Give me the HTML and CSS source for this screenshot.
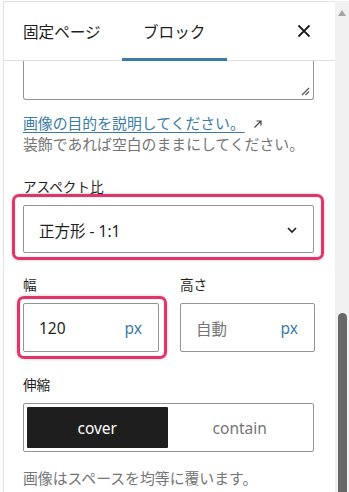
FILE: index.html
```html
<!DOCTYPE html>
<html lang="ja">
<head>
<meta charset="utf-8">
<link rel="stylesheet" href="styles.css">
</head>
<body>
<div class="window">
  <div class="panel">
    <div class="header">
      <div class="tab">固定ページ</div>
      <div class="tab active">ブロック</div>
      <div class="close">
        <svg width="14" height="14" viewBox="0 0 14 14"><path d="M1.5 1.5 12.5 12.5M12.5 1.5 1.5 12.5" stroke="#1e1e1e" stroke-width="1.8" fill="none"/></svg>
      </div>
    </div>
    <div class="content">
      <div class="textarea-frag">
        <svg class="resize" width="9" height="9" viewBox="0 0 9 9"><path d="M1 8 8 1M4.5 8 8 4.5" stroke="#555" stroke-width="1.2" fill="none"/></svg>
      </div>
      <p class="link-line"><a class="link">画像の目的を説明してください。</a><svg class="ext" width="10" height="10" viewBox="0 0 10 10"><path d="M1.5 8.5 8 2M3.5 2H8V6.5" stroke="#444" stroke-width="1.2" fill="none"/></svg></p>
      <p class="help">装飾であれば空白のままにしてください。</p>

      <div class="label first-label">アスペクト比</div>
      <div class="select-wrap">
        <div class="select">
          <span>正方形 - 1:1</span>
          <svg class="chev" width="12" height="8" viewBox="0 0 12 8"><path d="M2 2 6 6 10 2" stroke="#1e1e1e" stroke-width="1.6" fill="none"/></svg>
        </div>
        <div class="mark mark-select"></div>
      </div>

      <div class="dims">
        <div class="dim">
          <div class="label">幅</div>
          <div class="input-wrap">
            <div class="input"><span class="val">120</span><span class="unit">px</span></div>
            <div class="mark mark-width"></div>
          </div>
        </div>
        <div class="dim">
          <div class="label">高さ</div>
          <div class="input"><span class="val placeholder">自動</span><span class="unit">px</span></div>
        </div>
      </div>

      <div class="label">伸縮</div>
      <div class="toggle">
        <div class="opt selected">cover</div>
        <div class="opt">contain</div>
      </div>
      <p class="help help-last">画像はスペースを均等に覆います。</p>
    </div>
  </div>
  <div class="scrollbar">
    <div class="arrow"></div>
    <div class="thumb"></div>
  </div>
</div>
</body>
</html>
```
FILE: styles.css
```css
* { box-sizing: border-box; }
html, body { margin: 0; padding: 0; background: #fff; }
body {
  font-family: "Noto Sans", "Noto Sans CJK JP", sans-serif;
  color: #1e1e1e;
  width: 349px;
  height: 492px;
  overflow: hidden;
}
.window {
  display: flex;
  height: 492px;
  padding-top: 1px;
}
.panel {
  flex: 1;
  margin-left: 3px;
  border-left: 1px solid #e2e2e2;
  border-top: 1px solid #e2e2e2;
  min-width: 0;
}
.header {
  height: 59px;
  display: flex;
  align-items: stretch;
  border-bottom: 1px solid #e0e0e0;
}
.tab {
  display: flex;
  align-items: center;
  padding: 0 21px 0 19px;
  font-family: "Noto Sans CJK JP", sans-serif;
  font-size: 15.6px;
  color: #1e1e1e;
  position: relative;
}
.tab.active {
  padding: 0 21px;
  width: 105px;
  justify-content: center;
}
.tab.active::after {
  content: "";
  position: absolute;
  left: 0;
  right: 0;
  bottom: -1px;
  height: 3px;
  background: #3a7ca5;
}
.close {
  margin-left: auto;
  margin-right: 24px;
  display: flex;
  align-items: center;
}
.content {
  padding: 0 21px 0 19px;
}
.textarea-frag {
  height: 39px;
  border: 1px solid #949494;
  border-top: none;
  border-radius: 0 0 3px 3px;
  position: relative;
}
.resize {
  position: absolute;
  right: 3px;
  bottom: 3px;
}
.link-line, .help {
  margin: 0;
  font-family: "Noto Sans CJK JP", sans-serif;
  font-size: 14.85px;
  line-height: 21px;
}
.link-line {
  margin-top: 12px;
  display: flex;
  align-items: center;
}
.link {
  color: #3a7ca5;
  text-decoration: underline;
  text-underline-offset: 3px;
  text-decoration-thickness: 1px;
}
.ext { margin-left: 8px; margin-top: 2px; }
.help { color: #757575; }
.label {
  font-family: "Noto Sans CJK JP", sans-serif;
  font-size: 13.6px;
  line-height: 20px;
  font-weight: 400;
  color: #1e1e1e;
  margin-top: 22px;
  margin-bottom: 9px;
}
.first-label { margin-top: 22px; }
.select-wrap, .input-wrap { position: relative; }
.select {
  height: 48px;
  border: 1px solid #949494;
  border-radius: 2px;
  display: flex;
  align-items: center;
  justify-content: space-between;
  padding: 2px 15px 0 15px;
  font-size: 15.5px;
}
.mark {
  position: absolute;
  border: 3.5px solid #e2336b;
  border-radius: 7px;
  box-shadow: 0 0 3px rgba(0,0,0,0.25), inset 0 0 2px rgba(0,0,0,0.15);
  pointer-events: none;
}
.mark-select { left: -11px; right: -10px; top: -11px; bottom: -7px; }
.mark-width { left: -6px; right: -8px; top: -7px; bottom: -7px; }
.dims {
  display: grid;
  grid-template-columns: 136px 135px;
  column-gap: 21px;
}
.dims .label { margin-top: 21px; }
.input {
  height: 49px;
  border: 1px solid #949494;
  border-radius: 2px;
  display: flex;
  align-items: center;
  justify-content: space-between;
  padding: 1px 16px 0 15px;
  font-size: 15.5px;
}
.placeholder {
  color: #757575;
  font-family: "Noto Sans CJK JP", sans-serif;
}
.unit { color: #3a7ca5; }
.toggle {
  height: 49px;
  border: 1px solid #949494;
  border-radius: 2px;
  padding: 3px;
  display: grid;
  grid-template-columns: 1fr 1fr;
  column-gap: 2px;
}
.opt {
  display: flex;
  align-items: center;
  justify-content: center;
  font-size: 15.5px;
  color: #757575;
  border-radius: 1px;
}
.opt.selected {
  background: #1e1e1e;
  color: #fff;
}
.help-last { margin-top: 15px; }
.scrollbar {
  width: 14px;
  background: #f1f1f1;
  display: flex;
  flex-direction: column;
  align-items: center;
}
.arrow {
  margin-top: 9px;
  width: 0;
  height: 0;
  border-left: 4.5px solid transparent;
  border-right: 4.5px solid transparent;
  border-bottom: 6px solid #a3a3a3;
}
.thumb {
  margin-top: 297px;
  width: 9px;
  flex: 1;
  background: #686868;
  border-radius: 4.5px 4.5px 0 0;
}
```
